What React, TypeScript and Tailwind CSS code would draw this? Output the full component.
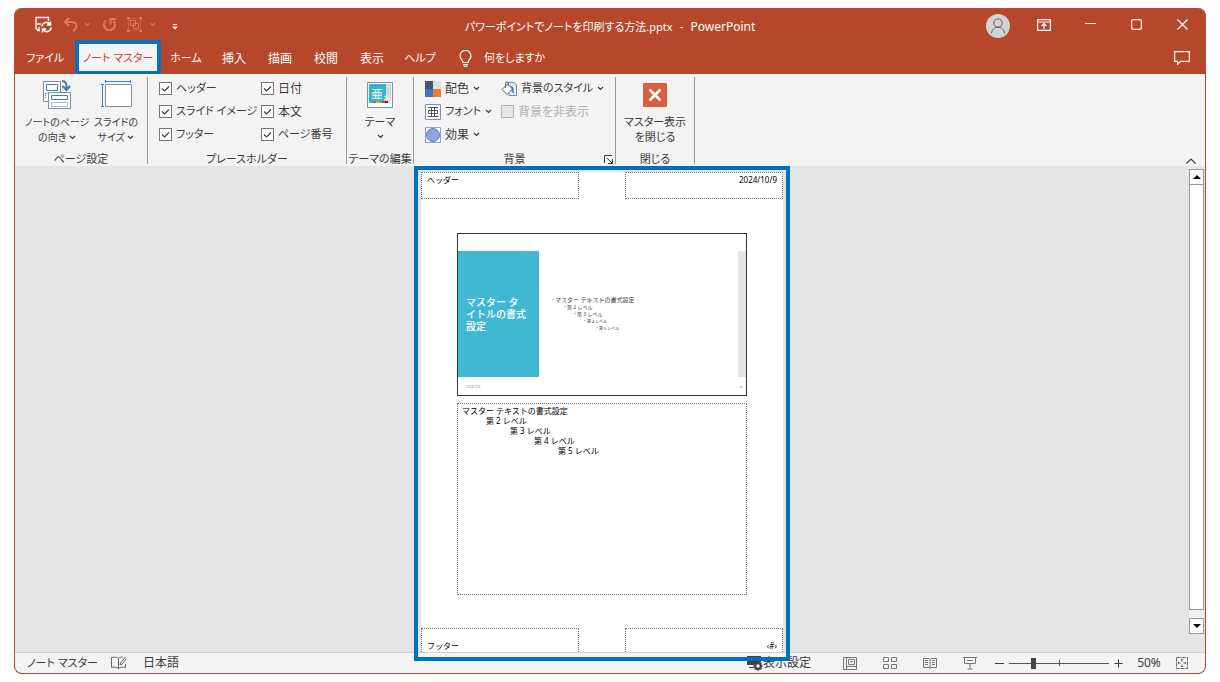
import React from 'react';

interface TabItem {
    label: string;
    width: string;
}

const tabs: TabItem[] = [
    { label: 'ホーム', width: 'w-[50px] text-[11px]' },
    { label: '挿入', width: 'w-[46px]' },
    { label: '描画', width: 'w-[46px]' },
    { label: '校閲', width: 'w-[46px]' },
    { label: '表示', width: 'w-[46px]' },
    { label: 'ヘルプ', width: 'w-[50px] text-[11px]' },
];

const placeholders = [
    { name: 'ヘッダー', size: 'text-[11px]' },
    { name: '日付', size: 'text-xs' },
    { name: 'スライド イメージ', size: 'text-[11px]' },
    { name: '本文', size: 'text-xs' },
    { name: 'フッター', size: 'text-[11px]' },
    { name: 'ページ番号', size: 'text-[11px]' },
];

const slideLevels = [
    { text: 'マスター テキストの書式設定', style: 'text-[6px] pl-0' },
    { text: '第 2 レベル', style: 'text-[5px] pl-3' },
    { text: '第 3 レベル', style: 'text-[5px] pl-[22px]' },
    { text: '第 4 レベル', style: 'text-[4px] pl-8' },
    { text: '第 5 レベル', style: 'text-[4px] pl-[44px]' },
];

const bodyLevels = [
    { text: 'マスター テキストの書式設定', indent: 'pl-0' },
    { text: '第 2 レベル', indent: 'pl-6' },
    { text: '第 3 レベル', indent: 'pl-12' },
    { text: '第 4 レベル', indent: 'pl-[72px]' },
    { text: '第 5 レベル', indent: 'pl-24' },
];

const Chevron: React.FC<{ className?: string }> = ({ className = '' }) => (
    <svg viewBox="0 0 7 5" className={`inline-block w-[7px] h-[5px] shrink-0 ${className}`} fill="none" stroke="currentColor" strokeWidth="1.2">
        <path d="M1 1l2.500 2.500L6 1" />
    </svg>
);

const TitleBar: React.FC = () => (
    <header className="grid grid-cols-[1fr_auto_1fr] items-center h-[33px] shrink-0">
        <div className="flex items-center pl-5 text-[#e2735a]">
            <button aria-label="保存" className="w-4 text-white">
                <svg viewBox="0 0 17 17" className="w-[17px] h-[17px]" fill="none" stroke="currentColor" strokeWidth="1.3">
                    <path d="M5 14.500H3L1 12.500V1.500h12.500V5" />
                    <path d="M2 8h4M4 14v-3" />
                    <path d="M7 10.500a4.200 4.200 0 017.800-2M15.500 5.500v3.500H12M16 11.500a4.200 4.200 0 01-7.800 2M7.500 16.500V13H11" strokeWidth="1.600" />
                </svg>
            </button>
            <button aria-label="元に戻す" className="ml-3">
                <svg viewBox="0 0 15 15" className="w-[15px] h-[15px]" fill="none" stroke="currentColor" strokeWidth="2.200">
                    <path d="M6 1L2 5l4 4M2 5h6.500c3 0 5 1.800 5 4 0 2-1.500 3.500-3.500 5" />
                </svg>
            </button>
            <Chevron className="ml-[6px]" />
            <button aria-label="繰り返し" className="ml-[11px]">
                <svg viewBox="0 0 15 15" className="w-[15px] h-[15px]" fill="none" stroke="currentColor" strokeWidth="2.200">
                    <path d="M4 3.500a5.500 5.500 0 107.500.5M8.500 7.500V2h5.500" />
                </svg>
            </button>
            <button aria-label="グループ化" className="ml-[10px]">
                <svg viewBox="0 0 15 15" className="w-[15px] h-[15px]" fill="none" stroke="currentColor">
                    <rect x="1.500" y="1.500" width="12" height="12" strokeDasharray="1 1" />
                    <path d="M3.500 3.500h5v5h-5zM6.500 6.500h5v5h-5z" />
                    <path d="M0 0h2.500v2.500H0zM12.500 0H15v2.500h-2.500zM0 12.500h2.500V15H0zM12.500 12.500H15V15h-2.500z" fill="currentColor" stroke="none" />
                </svg>
            </button>
            <Chevron className="ml-[7px]" />
            <button aria-label="クイック アクセス ツール バーのカスタマイズ" className="ml-4 pt-1 text-white">
                <svg viewBox="0 0 6 6" className="w-[6px] h-[6px]" fill="currentColor">
                    <path d="M1 0h4v1H1zM0 2.500h6L3 5.500z" />
                </svg>
            </button>
        </div>
        <h1 className="flex items-baseline gap-[7px] pt-1">
            <span className="text-[11px]">パワーポイントでノートを印刷する方法.pptx</span>
            <span>-</span>
            <span>PowerPoint</span>
        </h1>
        <div className="flex justify-end items-center">
            <button aria-label="アカウント" className="flex justify-center w-[46px] pt-[2px]">
                <svg viewBox="0 0 24 24" className="w-6 h-6" fill="none" stroke="#606060">
                    <circle cx="12" cy="12" r="12" fill="#d2d2d2" stroke="none" />
                    <circle cx="12" cy="9" r="4.200" />
                    <path d="M5.500 19.500c.5-4 3-6.300 6.500-6.300s6 2.300 6.500 6.300" />
                </svg>
            </button>
            <button aria-label="リボンの表示オプション" className="flex justify-center w-[46px]">
                <svg viewBox="0 0 14 12" className="w-[14px] h-3" fill="none" stroke="currentColor" strokeWidth="1.200">
                    <path d="M.6.6h12.800v10.800H.6zM.6 3h12.800M7 10V5M4.500 7L7 4.600 9.500 7" />
                </svg>
            </button>
            <button aria-label="最小化" className="flex justify-center w-[46px]">
                <svg viewBox="0 0 11 11" className="w-[11px] h-[11px]" stroke="currentColor">
                    <path d="M0 4.500h11" />
                </svg>
            </button>
            <button aria-label="最大化" className="flex justify-center w-[46px]">
                <svg viewBox="0 0 11 11" className="w-[11px] h-[11px]" fill="none" stroke="currentColor" strokeWidth="1.200">
                    <rect x=".6" y=".6" width="9.800" height="9.800" rx="1.500" />
                </svg>
            </button>
            <button aria-label="閉じる" className="flex justify-center w-[46px]">
                <svg viewBox="0 0 11 11" className="w-[11px] h-[11px]" stroke="currentColor" strokeWidth="1.200">
                    <path d="M.5.5l10 10M10.500.5l-10 10" />
                </svg>
            </button>
        </div>
    </header>
);

const TabBar: React.FC = () => (
    <nav className="flex items-stretch h-[33px] shrink-0">
        <button className="w-[60px] pt-[2px] text-[11px]">ファイル</button>
        <div className="relative w-[86px] bg-[#f3f3f3]">
            <button className="w-full h-full pt-[2px] text-[11px] text-[#c8492d] whitespace-nowrap">ノート マスター</button>
            <div className="absolute inset-x-0 -top-px -bottom-px border-4 border-[#0a70bd] pointer-events-none"></div>
        </div>
        {tabs.map((tab) => (
            <button key={tab.label} className={`${tab.width} pt-[2px] whitespace-nowrap`}>{tab.label}</button>
        ))}
        <button className="flex items-center gap-3 ml-[14px] pt-[2px] text-[11px]">
            <svg viewBox="0 0 13 17" className="w-[13px] h-[17px]" fill="none" stroke="currentColor" strokeWidth="1.200">
                <path d="M4 12.500c0-2-3-3.500-3-6.500a5.500 5.500 0 0111 0c0 3-3 4.500-3 6.500zM4 14.500h5M4.500 16.200h4" />
            </svg>
            何をしますか
        </button>
        <button aria-label="コメント" className="ml-auto mr-[15px]">
            <svg viewBox="0 0 16 14" className="w-4 h-[14px]" fill="none" stroke="currentColor" strokeWidth="1.200">
                <path d="M.6.6h14.800v9.800H6.500l-3 3v-3H.6z" />
            </svg>
        </button>
    </nav>
);

interface GroupProps {
    label: string;
    width: string;
    launcher?: boolean;
    children: React.ReactNode;
}

const RibbonGroup: React.FC<GroupProps> = ({ label, width, launcher, children }) => (
    <section className={`${width} relative flex flex-col shrink-0 border-r border-[#9a9a9a]`}>
        <div className="flex-1">{children}</div>
        <h2 className="h-[10px] leading-[10px] text-[11px] text-center whitespace-nowrap">{label}</h2>
        {launcher && (
            <button aria-label="背景の書式設定" className="absolute right-[2px] bottom-0">
                <svg viewBox="0 0 9 9" className="w-[9px] h-[9px]" fill="none" stroke="currentColor">
                    <path d="M.5 8V.5H8M3 3l5 5M8.500 4v4.500H4" />
                </svg>
            </button>
        )}
    </section>
);

const CheckOption: React.FC<{ label: string; size: string }> = ({ label, size }) => (
    <label className={`${size} flex items-center h-[23px] whitespace-nowrap`}>
        <span className="relative w-[13px] h-[13px] mr-1">
            <input type="checkbox" defaultChecked className="peer block appearance-none w-[13px] h-[13px] border border-[#757575] bg-white" />
            <svg viewBox="0 0 13 13" className="hidden peer-checked:block absolute inset-0 w-[13px] h-[13px] pointer-events-none" fill="none" stroke="currentColor" strokeWidth="1.200">
                <path d="M3 6.500L5.500 9 10 4.500" />
            </svg>
        </span>
        {label}
    </label>
);

const Ribbon: React.FC = () => (
    <div className="relative flex h-[92px] shrink-0 pt-[3px] pb-[2px] bg-[#f3f3f3] text-[#3b3b3b]">
        <RibbonGroup label="ページ設定" width="w-[133px]">
            <div className="flex pl-2 text-[10px] leading-[15px]">
                <button className="flex flex-col items-center w-[68px] whitespace-nowrap">
                    <svg viewBox="0 0 30 32" className="w-[30px] h-8 mt-[2px] mb-1" fill="none">
                        <path d="M1.500 2.500h17v20h-17z" fill="#fff" stroke="#7f8b96" />
                        <path d="M4.500 5.500h11v6h-11z" stroke="#3b7cbc" />
                        <path d="M3.500 14v6M3.500 14h3" stroke="#3b7cbc" strokeDasharray="1 1" />
                        <path d="M6.500 13.500h22v16h-22z" fill="#fff" stroke="#7f8b96" />
                        <path d="M9.500 16.500h16v4h-16z" stroke="#3b7cbc" />
                        <path d="M9.500 23.500h16v4h-16z" stroke="#3b7cbc" strokeDasharray="1 1" />
                        <path d="M20 2c3 0 4.500 2 4.500 5v3M20.500 7l4 4 3.500-4" stroke="#3b7cbc" strokeWidth="2" />
                    </svg>
                    <span>ノートのページ</span>
                    <span>の向き <Chevron className="mb-[2px]" /></span>
                </button>
                <button className="flex flex-col items-center w-[50px] whitespace-nowrap">
                    <svg viewBox="0 0 32 32" className="w-8 h-8 mt-[2px] mb-1" fill="none">
                        <path d="M5.500 5.500h26v22h-26z" fill="#fff" stroke="#8a8f94" />
                        <path d="M5 2.500h26M5.500 1v3M30.500 1v3M2.500 5v22M1 5.500h3M1 27.500h3" stroke="#3b7cbc" />
                    </svg>
                    <span>スライドの</span>
                    <span>サイズ <Chevron className="mb-[2px]" /></span>
                </button>
            </div>
        </RibbonGroup>

        <RibbonGroup label="プレースホルダー" width="w-[199px]">
            <div className="grid grid-cols-[102px_auto] pl-[11px]">
                {placeholders.map((item) => (
                    <CheckOption key={item.name} label={item.name} size={item.size} />
                ))}
            </div>
        </RibbonGroup>

        <RibbonGroup label="テーマの編集" width="w-[67px]">
            <button className="flex flex-col items-center w-full text-[11px] leading-[15px]">
                <svg viewBox="0 0 26 26" className="w-[26px] h-[26px] mt-[5px] mb-[6px]">
                    <path d="M.5.5h25v25H.5z" fill="#fff" stroke="#7f9499" />
                    <path d="M2 2h17v19H2z" fill="#35b3cb" />
                    <path d="M19 2h5v19h-5z" fill="#d8d8d8" />
                    <text x="4" y="17" fontSize="12" fill="#fff" fontFamily="Noto Sans CJK JP">亜</text>
                    <text x="16" y="19" fontSize="7" fill="#fff" fontFamily="Noto Sans CJK JP">あ</text>
                    <path d="M6 19h3v2H6z" fill="#d65532" />
                    <path d="M9 19h3v2H9z" fill="#e8a33d" />
                    <path d="M12 19h3v2h-3z" fill="#70ad47" />
                    <path d="M15 19h3v2h-3z" fill="#9b4a8c" />
                    <path d="M18 19h3v2h-3z" fill="#c00000" />
                </svg>
                <span>テーマ</span>
                <Chevron className="mt-[5px]" />
            </button>
        </RibbonGroup>

        <RibbonGroup label="背景" width="w-[202px]" launcher>
            <div className="grid grid-cols-[76px_auto] pl-[11px] whitespace-nowrap">
                <button className="flex items-center h-[23px] gap-1">
                    <svg viewBox="0 0 16 16" className="w-4 h-4">
                        <path d="M0 0h8v8H0z" fill="#44546a" />
                        <path d="M8 0h8v8H8z" fill="#e0e0e0" />
                        <path d="M0 8h8v8H0z" fill="#4472c4" />
                        <path d="M8 8h8v8H8z" fill="#ed7d31" />
                    </svg>
                    配色 <Chevron />
                </button>
                <button className="flex items-center h-[23px] gap-1 text-[11px]">
                    <svg viewBox="0 0 16 16" className="w-4 h-4 shrink-0" fill="none">
                        <path d="M7 1.500h6l2.500 2.500v10.500H8z" fill="#dcebf7" stroke="#7f8b96" />
                        <path d="M9 5c3 0 4 2 3.500 8L10 9z" fill="#3b7cbc" />
                        <path d="M1 8.500L6.500 3l5 5L6 13.500z" fill="#fff" stroke="#606060" />
                        <path d="M4.500 7V2.500a1.500 1.500 0 013 0V5" stroke="#606060" />
                    </svg>
                    背景のスタイル <Chevron />
                </button>
                <button className="flex items-center h-[23px] gap-1 text-[11px]">
                    <svg viewBox="0 0 16 16" className="w-4 h-4 shrink-0" fill="none">
                        <path d="M.5.5h15v15H.5z" fill="#fff" stroke="#8291a5" />
                        <path d="M3 3.500h10M2.500 12.500h11M6.500 3.500v9M9.500 3.500v9M3.500 6.500h9v3h-9z" stroke="#555" />
                    </svg>
                    フォント <Chevron />
                </button>
                <label className="flex items-center h-[23px] gap-1 text-[#b1b1b1]">
                    <input type="checkbox" disabled className="appearance-none w-[13px] h-[13px] border border-[#b1b1b1] bg-[#e6e6e6]" />
                    背景を非表示
                </label>
                <button className="flex items-center h-[23px] gap-1">
                    <svg viewBox="0 0 16 16" className="w-4 h-4">
                        <path d="M.5.5h15v15H.5z" fill="#fff" stroke="#8fa3c7" />
                        <circle cx="8" cy="8" r="6.500" fill="#8ea5e0" stroke="#5b78c2" />
                    </svg>
                    効果 <Chevron />
                </button>
            </div>
        </RibbonGroup>

        <RibbonGroup label="閉じる" width="w-[79px]">
            <button className="flex flex-col items-center w-full text-[11px] leading-[15px]">
                <svg viewBox="0 0 24 24" className="w-6 h-6 mt-[6px] mb-[7px]" fill="none">
                    <rect width="24" height="24" rx="1" fill="#d9603f" />
                    <path d="M6.500 6.500l11 11M17.500 6.500l-11 11" stroke="#fff" strokeWidth="2.600" />
                </svg>
                <span>マスター表示</span>
                <span>を閉じる</span>
            </button>
        </RibbonGroup>

        <button aria-label="リボンを折りたたむ" className="mt-auto ml-auto mr-[9px]">
            <svg viewBox="0 0 10 6" className="w-[10px] h-[6px]" fill="none" stroke="currentColor" strokeWidth="1.200">
                <path d="M.5 5.500L5 1l4.500 4.500" />
            </svg>
        </button>
    </div>
);

const SlideImage: React.FC = () => (
    <div className="flex flex-col h-[163px] mx-9 mt-[34px] border border-[#333] bg-white">
        <div className="flex h-[126px] mt-[17px]">
            <div className="flex items-center w-[81px] pl-2 bg-[#41b8d2] text-white text-[10px] leading-3 font-medium">
                <p>マスター タ<br />イトルの書式<br />設定</p>
            </div>
            <ul className="flex-1 self-center pl-3 leading-[7px] text-[#444]">
                {slideLevels.map((level) => (
                    <li key={level.text} className={`${level.style} flex`}>
                        <span className="w-1 text-[4px] text-[#41b8d2]">▪</span>
                        {level.text}
                    </li>
                ))}
            </ul>
            <div className="w-2 bg-[#e3e3e3]"></div>
        </div>
        <div className="flex justify-between pl-2 pr-[3px] pt-2 text-[3px] leading-[5px] text-[#888]">
            <span>2024/10/9</span>
            <span className="text-[#2b9cb5]">‹#›</span>
        </div>
    </div>
);

const NotesPage: React.FC = () => (
    <div className="relative flex flex-col w-[362px] mt-[6px] bg-white text-black text-[8px] leading-[10px] [font-feature-settings:normal]">
        <div className="flex justify-between">
            <div className="w-[158px] h-[27px] px-[5px] pt-[2px] border border-dotted border-[#777]">ヘッダー</div>
            <div className="w-[158px] h-[27px] px-[5px] pt-[2px] border border-dotted border-[#777] text-right">2024/10/9</div>
        </div>
        <SlideImage />
        <ul className="h-[192px] mx-9 mt-[7px] px-1 pt-[2px] border border-dotted border-[#777]">
            {bodyLevels.map((level) => (
                <li key={level.text} className={level.indent}>{level.text}</li>
            ))}
        </ul>
        <div className="flex justify-between mt-auto">
            <div className="w-[158px] h-6 px-[5px] pt-3 border border-b-0 border-dotted border-[#777]">フッター</div>
            <div className="w-[158px] h-6 px-[5px] pt-3 border border-b-0 border-dotted border-[#777] text-right">‹#›</div>
        </div>
        <div className="absolute z-10 -inset-x-[7px] -top-[6px] -bottom-[9px] border-4 border-[#0070bc] pointer-events-none"></div>
    </div>
);

const ScrollBar: React.FC = () => (
    <div className="flex flex-col w-[15px] mt-[3px] mr-px mb-[18px] bg-[#f0f0f0]">
        <button aria-label="上へスクロール" className="flex items-center justify-center h-4 border border-[#999] bg-white">
            <svg viewBox="0 0 8 4" className="w-2 h-1" fill="#000"><path d="M0 4l4-4 4 4z" /></svg>
        </button>
        <div className="flex-1 border border-t-0 border-[#999] bg-white"></div>
        <button aria-label="下へスクロール" className="flex items-center justify-center h-4 mt-2 border border-[#999] bg-white">
            <svg viewBox="0 0 8 4" className="w-2 h-1" fill="#000"><path d="M0 0l4 4 4-4z" /></svg>
        </button>
    </div>
);

const StatusBar: React.FC = () => (
    <footer className="flex items-center h-[21px] shrink-0 pl-3 pr-[17px] border-t border-[#cfcfcf] bg-[#f3f3f3] text-[#3b3b3b] whitespace-nowrap">
        <span className="w-[84px] text-[11px]">ノート マスター</span>
        <svg viewBox="0 0 16 14" className="w-4 h-[14px] mr-4" fill="none" stroke="#666">
            <path d="M7.500 2.500C6 1 3 1 .5 1.500v10c2.500-.5 5.500-.5 7 1 1.500-1.500 4-1.500 7-1V8M7.500 2.500v10M7.500 2.500c1-1 2.500-1.500 4-1.500M14.500 1l-5 6-.5 2 2-.8 4-5.200" />
        </svg>
        <button>日本語</button>
        <button className="flex items-center ml-auto mr-8">
            <svg viewBox="0 0 16 15" className="w-4 h-[15px]">
                <path d="M0 0h14v6h-3L7 9H0z" fill="#444" />
                <path d="M2 11h5v1H2z" fill="#444" />
                <circle cx="11" cy="10" r="3" fill="#f3f3f3" stroke="#444" strokeWidth="1.800" />
                <path d="M11 5v10M6 10h10M7.500 6.500l7 7M14.500 6.500l-7 7" stroke="#444" strokeWidth="1.200" />
                <circle cx="11" cy="10" r="1.700" fill="#f3f3f3" />
            </svg>
            表示設定
        </button>
        <div className="flex items-center gap-[26px] text-[#777]">
            <button aria-label="標準">
                <svg viewBox="0 0 14 13" className="w-[14px] h-[13px]" fill="none" stroke="currentColor">
                    <path d="M.5.5h13v12H.5zM3.500.5v12M5.500 2.500h6v5h-6zM3.500 9.500h10M7 4.500h3" />
                </svg>
            </button>
            <button aria-label="スライド一覧">
                <svg viewBox="0 0 14 13" className="w-[14px] h-[13px]" fill="none" stroke="currentColor">
                    <path d="M.5.5h5v4h-5zM8.500.5h5v4h-5zM.5 7.500h5v4h-5zM8.500 7.500h5v4h-5z" />
                </svg>
            </button>
            <button aria-label="閲覧表示">
                <svg viewBox="0 0 14 13" className="w-[14px] h-[13px]" fill="none" stroke="currentColor">
                    <path d="M.5 1.500h5.500l1 1 1-1h5.500v9H8l-1 1-1-1H.5zM7 2.500v9M2 3.500h3M2 5.500h3M2 7.500h3M9 3.500h3M9 5.500h3M9 7.500h3" />
                </svg>
            </button>
            <button aria-label="スライド ショー">
                <svg viewBox="0 0 14 13" className="w-[14px] h-[13px]" fill="none" stroke="currentColor">
                    <path d="M0 .5h14M1.500.5v6h11v-6M4 3.500h6M7 6.500v5M4.500 12h5" />
                </svg>
            </button>
        </div>
        <button aria-label="縮小" className="ml-[18px]">
            <svg viewBox="0 0 9 9" className="w-[9px] h-[9px]" stroke="currentColor"><path d="M0 4.500h9" /></svg>
        </button>
        <div className="relative flex items-center w-[100px] h-3 mx-[5px]">
            <span className="absolute left-1/2 top-[3px] w-px h-[6px] bg-[#555]"></span>
            <input
                type="range"
                aria-label="ズーム"
                min={0}
                max={100}
                defaultValue={23}
                className="relative w-full h-3 appearance-none bg-transparent [&::-webkit-slider-runnable-track]:h-px [&::-webkit-slider-runnable-track]:bg-[#555] [&::-webkit-slider-thumb]:appearance-none [&::-webkit-slider-thumb]:w-[5px] [&::-webkit-slider-thumb]:h-[11px] [&::-webkit-slider-thumb]:-mt-[5px] [&::-webkit-slider-thumb]:bg-[#444]"
            />
        </div>
        <button aria-label="拡大">
            <svg viewBox="0 0 9 9" className="w-[9px] h-[9px]" stroke="currentColor"><path d="M.5 4.500h8M4.500.5v8" /></svg>
        </button>
        <button className="w-10 ml-[6px] mr-[7px] text-center">50%</button>
        <button aria-label="ウィンドウに合わせる">
            <svg viewBox="0 0 12 12" className="w-3 h-3" fill="none" stroke="#666">
                <path d="M.5.5h11v11H.5z" strokeDasharray="4 1" />
                <path d="M6 2v2.500M6 7.500V10M2 6h2.500M7.500 6H10M5 3l1-1 1 1M5 9l1 1 1-1M3 5L2 6l1 1M9 5l1 1-1 1" />
            </svg>
        </button>
    </footer>
);

const App: React.FC = () => {
    return (
        <div lang="ja" className="h-screen px-[14px] py-2 bg-white text-xs text-white font-['Noto_Sans','Noto_Sans_CJK_JP',sans-serif] [font-feature-settings:'palt']">
            <div className="flex flex-col h-full rounded-lg overflow-hidden border border-t-0 border-[#b7472a] bg-[#b7472a]">
                <TitleBar />
                <TabBar />
                <Ribbon />
                <main className="flex flex-1 min-h-0 bg-[#e5e5e5]">
                    <div className="flex flex-1 justify-center">
                        <NotesPage />
                    </div>
                    <ScrollBar />
                </main>
                <StatusBar />
            </div>
        </div>
    );
};

export default App;
